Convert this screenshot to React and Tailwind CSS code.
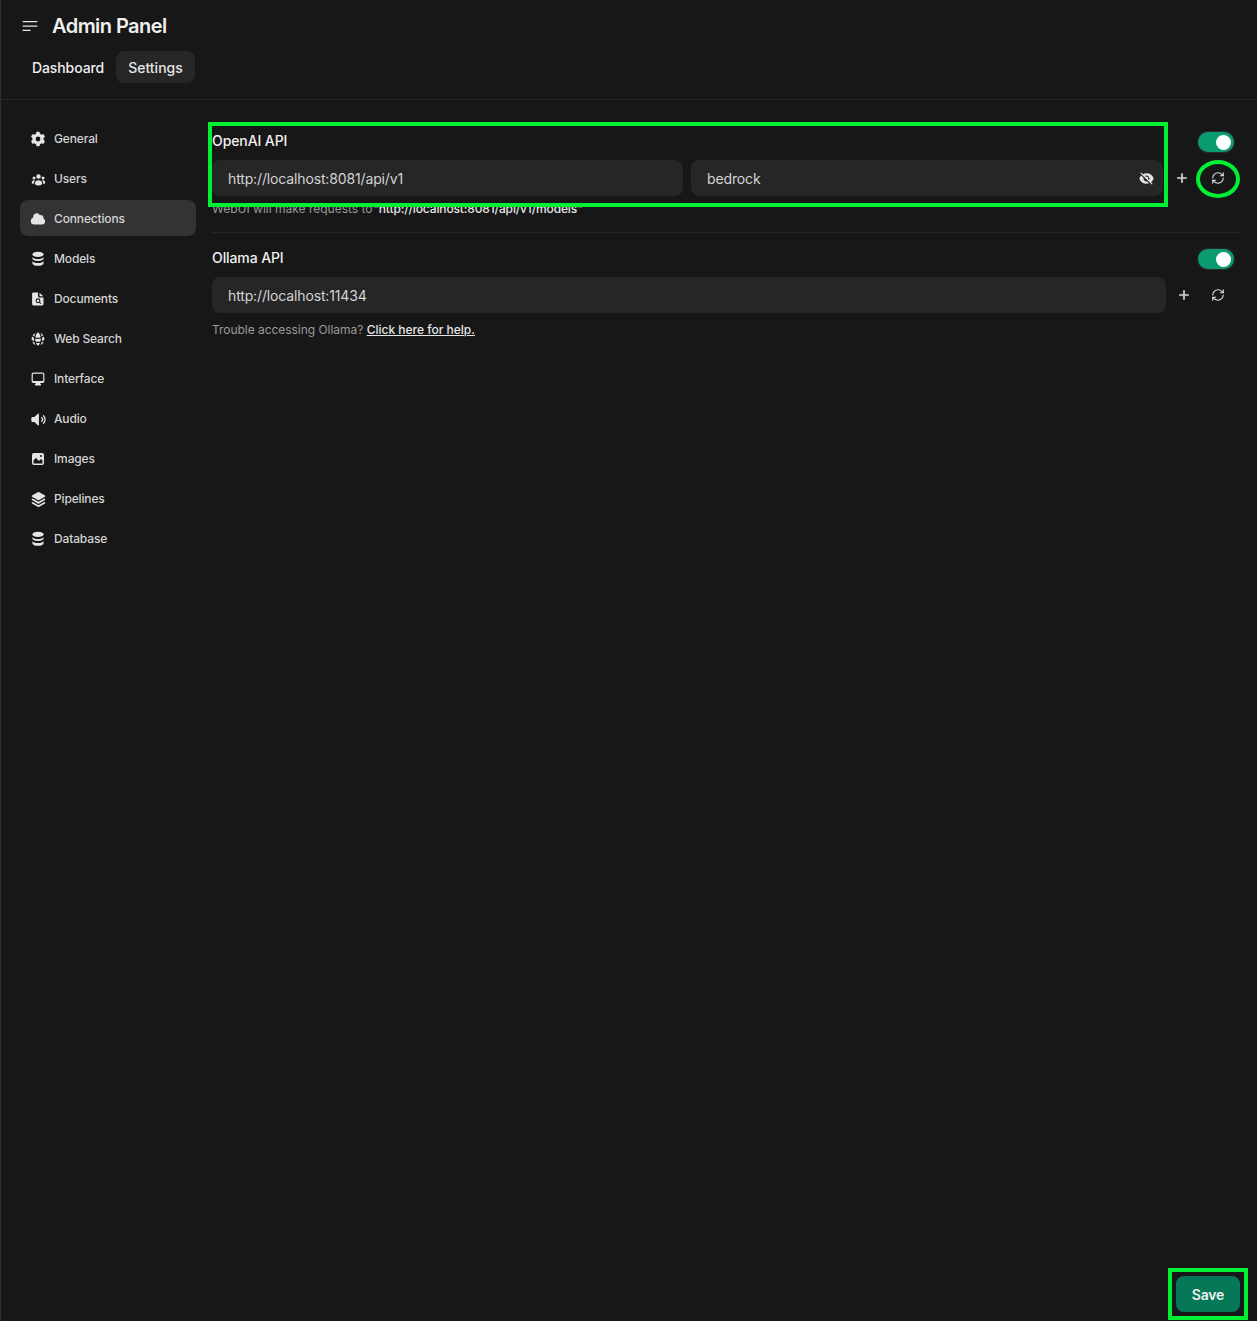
import {
  HiMiniCog6Tooth,
  HiMiniUserGroup,
  HiMiniCloud,
  HiMiniGlobeAlt,
  HiMiniComputerDesktop,
  HiMiniSpeakerWave,
  HiMiniSquare3Stack3D,
  HiMiniEyeSlash,
  HiMiniPlus,
  HiOutlineBars3BottomLeft,
} from 'react-icons/hi2';
import { RefreshCw } from 'lucide-react';

// react-icons has no 16px "micro" heroicons, so these three are drawn by hand
const StackIcon = ({ className }) => (
  <svg viewBox="0 0 16 16" width={16} height={16} fill="currentColor" className={className}>
    <ellipse cx="8" cy="3.4" rx="5.6" ry="2.6" />
    <path d="M2.4 5.9C3 7.3 5.3 8 8 8s5-.7 5.6-2.1V7.6C13.6 9 11.1 10 8 10s-5.6-1-5.6-2.4Z" />
    <path d="M2.4 9.9C3 11.3 5.3 12 8 12s5-.7 5.6-2.1v2C13.6 13.6 11.1 14.8 8 14.8s-5.6-1.2-5.6-2.9Z" />
  </svg>
);

const DocumentIcon = ({ className }) => (
  <svg viewBox="0 0 16 16" width={16} height={16} className={className}>
    <path
      fill="currentColor"
      d="M3.5 1.5H8V5a1.5 1.5 0 0 0 1.5 1.5h4v6.6A1.4 1.4 0 0 1 12.100 14.500H3.500A1.400 1.400 0 0 1 2.100 13.100V2.900A1.400 1.400 0 0 1 3.500 1.500Z"
    />
    <path fill="currentColor" d="M9.500 1.700 13.300 5.300H10a.5.5 0 0 1-.5-.5Z" />
    <circle cx="8" cy="9.800" r="1.900" fill="none" stroke="#171717" strokeWidth="1.100" />
    <path d="M9.400 11.200 10.800 12.600" stroke="#171717" strokeWidth="1.100" />
  </svg>
);

const PhotoIcon = ({ className }) => (
  <svg viewBox="0 0 16 16" width={16} height={16} fill="currentColor" className={className}>
    <path
      fillRule="evenodd"
      clipRule="evenodd"
      d="M2 4a2 2 0 0 1 2-2h8a2 2 0 0 1 2 2v8a2 2 0 0 1-2 2H4a2 2 0 0 1-2-2V4Zm10.500 5.707a.5.5 0 0 0-.146-.353l-1-1a.5.5 0 0 0-.708 0L9.354 9.646a.5.5 0 0 1-.708 0L6.354 7.354a.5.5 0 0 0-.708 0l-2 2a.5.5 0 0 0-.146.353V12a.5.5 0 0 0 .5.5h8a.5.5 0 0 0 .5-.5V9.707ZM12 5a1 1 0 1 1-2 0 1 1 0 0 1 2 0Z"
    />
  </svg>
);

const NAV = [
  { label: 'General', icon: HiMiniCog6Tooth },
  { label: 'Users', icon: HiMiniUserGroup, iconSize: 15 },
  { label: 'Connections', icon: HiMiniCloud, active: true },
  { label: 'Models', icon: StackIcon },
  { label: 'Documents', icon: DocumentIcon },
  { label: 'Web Search', icon: HiMiniGlobeAlt },
  { label: 'Interface', icon: HiMiniComputerDesktop },
  { label: 'Audio', icon: HiMiniSpeakerWave, iconSize: 17 },
  { label: 'Images', icon: PhotoIcon },
  { label: 'Pipelines', icon: HiMiniSquare3Stack3D, iconSize: 17 },
  { label: 'Database', icon: StackIcon },
];

const Toggle = () => (
  <div className="flex h-5 w-9 items-center justify-end rounded-full bg-[#0b9b70] pr-[3px] ring-1 ring-[#2a2a2a]">
    <span className="h-[15px] w-[15px] rounded-full bg-white" />
  </div>
);

const Field = ({ value, className = '', children }) => (
  <div className={`flex h-9 min-w-0 flex-1 items-center justify-between rounded-lg bg-[#262626] pl-4 pr-[9px] text-sm tracking-[-0.14px] text-[#d4d4d4] ${className}`}>
    <span className="pt-0.5">{value}</span>
    {children}
  </div>
);

const RowActions = ({ plusClass, refreshClass }) => (
  <div className="flex items-center text-[#e5e5e5]">
    <HiMiniPlus size={16} stroke="currentColor" strokeWidth={0.6} className={plusClass} />
    <RefreshCw size={14} strokeWidth={1.8} className={`mr-[15px] ${refreshClass}`} />
  </div>
);

const App = () => (
  <div
    className="flex h-screen flex-col overflow-hidden border-l border-[#2e2e2e] bg-[#171717] text-white"
    style={{ fontFamily: 'Inter, "Noto Sans", sans-serif' }}
  >
    <header className="h-[100px] shrink-0 border-b border-[#262626] pl-[19px] pt-[14px]">
      <div className="flex h-[24px] items-center">
        <HiOutlineBars3BottomLeft size={20} className="text-[#e5e5e5]" />
        <h1 className="ml-[12px] text-xl font-semibold tracking-[-0.55px] text-[#f0f0f0]">Admin Panel</h1>
      </div>
      <nav className="mt-[13px] flex text-sm font-medium">
        <span className="flex h-8 w-[96px] items-center rounded-lg pl-3 pt-0.5 tracking-[-0.1px] text-[#f0f0f0]">Dashboard</span>
        <span className="flex h-8 w-[79px] items-center justify-center rounded-lg bg-[#262626] pt-0.5 text-[#e5e5e5]">Settings</span>
      </nav>
    </header>

    <div className="flex min-h-0 flex-1">
      <aside className="ml-[19px] mt-5 flex w-[176px] shrink-0 flex-col gap-1">
        {NAV.map(({ label, icon: Icon, iconSize = 16, active }) => (
          <div
            key={label}
            className={`flex h-9 items-center rounded-lg pl-2.5 pt-0.5 text-xs font-medium tracking-[-0.15px] text-[#d4d4d4] ${active ? 'bg-[#333333]' : ''}`}
          >
            <span className="flex w-4 shrink-0 justify-center">
              <Icon size={iconSize} className="shrink-0 text-[#e5e5e5]" />
            </span>
            <span className="ml-2">{label}</span>
          </div>
        ))}
      </aside>

      <main className="ml-4 mr-[17px] flex min-w-0 flex-1 flex-col justify-between pb-[9px] pt-8">
        <div>
          <div className="flex h-5 items-center justify-between pr-[6px]">
            <h2 className="pb-0.5 text-sm font-medium tracking-[-0.1px] text-[#f0f0f0]">OpenAI API</h2>
            <Toggle />
          </div>
          <div className="mt-2 flex items-center">
            <div className="flex min-w-0 flex-1 gap-2">
              <Field value="http://localhost:8081/api/v1" className="max-w-[471px]" />
              <Field value="bedrock">
                <HiMiniEyeSlash size={15} className="text-[#e5e5e5]" />
              </Field>
            </div>
            <RowActions plusClass="ml-[11px]" refreshClass="ml-[21px]" />
          </div>
          <p className="mt-[5px] text-xs text-[#9a9a9a]">
            WebUI will make requests to{' '}
            <span className="ml-[-3px] font-medium tracking-[-0.13px] text-[#e5e5e5]">"http://localhost:8081/api/v1/models"</span>
          </p>

          <hr className="mt-[15px] border-[#262626]" />

          <div className="mt-4 flex h-5 items-center justify-between pr-[6px]">
            <h2 className="pb-0.5 text-sm font-medium tracking-[-0.1px] text-[#f0f0f0]">Ollama API</h2>
            <Toggle />
          </div>
          <div className="mt-2 flex items-center">
            <div className="flex min-w-0 flex-1">
              <Field value="http://localhost:11434" />
            </div>
            <RowActions plusClass="ml-[10px]" refreshClass="ml-[19px]" />
          </div>
          <p className="mt-[9px] text-xs text-[#9a9a9a]">
            <span className="tracking-[-0.04px]">Trouble accessing Ollama?</span>{' '}
            <span className="font-medium text-[#e5e5e5] underline">Click here for help.</span>
          </p>
        </div>

        <div className="flex justify-end">
          <button className="h-9 w-16 rounded-lg bg-[#047857] pt-0.5 text-sm font-semibold tracking-[-0.2px] text-[#f0f0f0]">Save</button>
        </div>
      </main>
    </div>

    {/* review marks drawn over the screenshot */}
    <div className="absolute left-[208px] top-[122px] h-[85px] w-[960px] border-[4px] border-[#00f034]" />
    <div className="absolute left-[1196px] top-[160px] h-[38px] w-[44px] rounded-[50%] border-[4px] border-[#00f034]" />
    <div className="absolute left-[1168px] top-[1268px] h-[52px] w-[80px] border-[4px] border-[#00f034]" />
  </div>
);

export default App;
